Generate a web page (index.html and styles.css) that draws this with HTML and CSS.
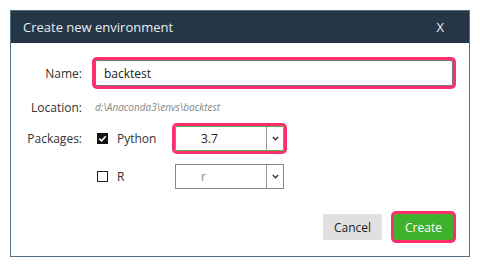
FILE: index.html
```html
<!DOCTYPE html>
<html lang="en">
<head>
  <meta charset="UTF-8">
  <title>Create new environment</title>
  <link rel="stylesheet" href="styles.css">
</head>
<body>
  <div class="dialog">
    <div class="dialog-header">
      <span class="dialog-title">Create new environment</span>
      <span class="dialog-close">X</span>
    </div>
    <div class="dialog-body">
      <div class="row row-name">
        <label class="field-label" for="envName">Name:</label>
        <input class="text-input focused" id="envName" type="text" value="backtest">
      </div>
      <div class="row row-location">
        <span class="field-label">Location:</span>
        <span class="location">d:\Anaconda3\envs\backtest</span>
      </div>
      <div class="row row-python">
        <span class="field-label">Packages:</span>
        <span class="checkbox checked">
          <svg width="9" height="9" viewBox="0 0 9 9"><path d="M1.3 4.6 L3.5 6.8 L7.8 2.2" fill="none" stroke="#fff" stroke-width="1.6"/></svg>
        </span>
        <span class="pkg-name">Python</span>
        <div class="select focused green">
          <span class="select-value">3.7</span>
          <span class="select-arrow">
            <svg width="7" height="5" viewBox="0 0 7 5"><path d="M0.8 1 L3.5 3.8 L6.2 1" fill="none" stroke="#333" stroke-width="1.3"/></svg>
          </span>
        </div>
      </div>
      <div class="row row-r">
        <span class="field-label"></span>
        <span class="checkbox"></span>
        <span class="pkg-name">R</span>
        <div class="select">
          <span class="select-value muted">r</span>
          <span class="select-arrow">
            <svg width="7" height="5" viewBox="0 0 7 5"><path d="M0.8 1 L3.5 3.8 L6.2 1" fill="none" stroke="#333" stroke-width="1.3"/></svg>
          </span>
        </div>
      </div>
      <div class="actions">
        <button class="btn btn-cancel">Cancel</button>
        <button class="btn btn-create focused">Create</button>
      </div>
    </div>
  </div>
</body>
</html>
```

FILE: styles.css
```css
body {
  margin: 0;
  padding: 10px;
  background-color: #fff;
  font-family: "Open Sans", "DejaVu Sans", sans-serif;
  color: #333;
}

.dialog {
  width: 458px;
  border: 1px solid #4f7185;
  background-color: #fff;
}

.dialog-header {
  height: 32px;
  background-color: #253647;
  color: #e8edf2;
  display: flex;
  align-items: center;
  justify-content: space-between;
  padding: 0 25px 0 12px;
  font-size: 13px;
}

.dialog-body {
  padding: 17px 16px 16px 0;
}

.row {
  display: flex;
  align-items: center;
}

.field-label {
  width: 71px;
  text-align: right;
  font-size: 12px;
  margin-right: 13px;
  flex-shrink: 0;
}

.focused {
  box-shadow: 0 0 0 3px #ff2d6c;
  border-radius: 2px;
}

.text-input {
  width: 358px;
  height: 26px;
  box-sizing: border-box;
  border: 1px solid #777;
  padding: 0 8px;
  font-family: inherit;
  font-size: 12px;
  color: #222;
  outline: none;
}

.row-location {
  height: 18px;
  margin-top: 12px;
}

.location {
  font-size: 10px;
  font-style: italic;
  color: #888;
}

.row-python {
  margin-top: 10px;
}

.row-r {
  margin-top: 13px;
}

.checkbox {
  width: 11px;
  height: 11px;
  box-sizing: border-box;
  border: 1.5px solid #222;
  margin-left: 2px;
  display: flex;
  align-items: center;
  justify-content: center;
}

.checkbox.checked {
  background-color: #111;
  border-color: #111;
}

.pkg-name {
  font-size: 12px;
  margin-left: 9px;
  width: 58px;
}

.select {
  width: 109px;
  height: 25px;
  box-sizing: border-box;
  border: 1px solid #888;
  display: flex;
  font-size: 12px;
}

.select.green {
  border-color: #5cb04c;
}

.select-value {
  flex: 1;
  padding-left: 25px;
  line-height: 23px;
  color: #222;
}

.select-value.muted {
  color: #6f93a8;
}

.select-arrow {
  width: 16px;
  border-left: 1px solid #999;
  display: flex;
  align-items: center;
  justify-content: center;
}

.actions {
  display: flex;
  justify-content: flex-end;
  gap: 12px;
  margin-top: 25px;
}

.btn {
  width: 59px;
  height: 26px;
  border: none;
  font-family: inherit;
  font-size: 12px;
  padding: 0;
  cursor: pointer;
}

.btn-cancel {
  background-color: #e0e0e0;
  color: #222;
}

.btn-create {
  background-color: #3fb12c;
  color: #fff;
}
```
